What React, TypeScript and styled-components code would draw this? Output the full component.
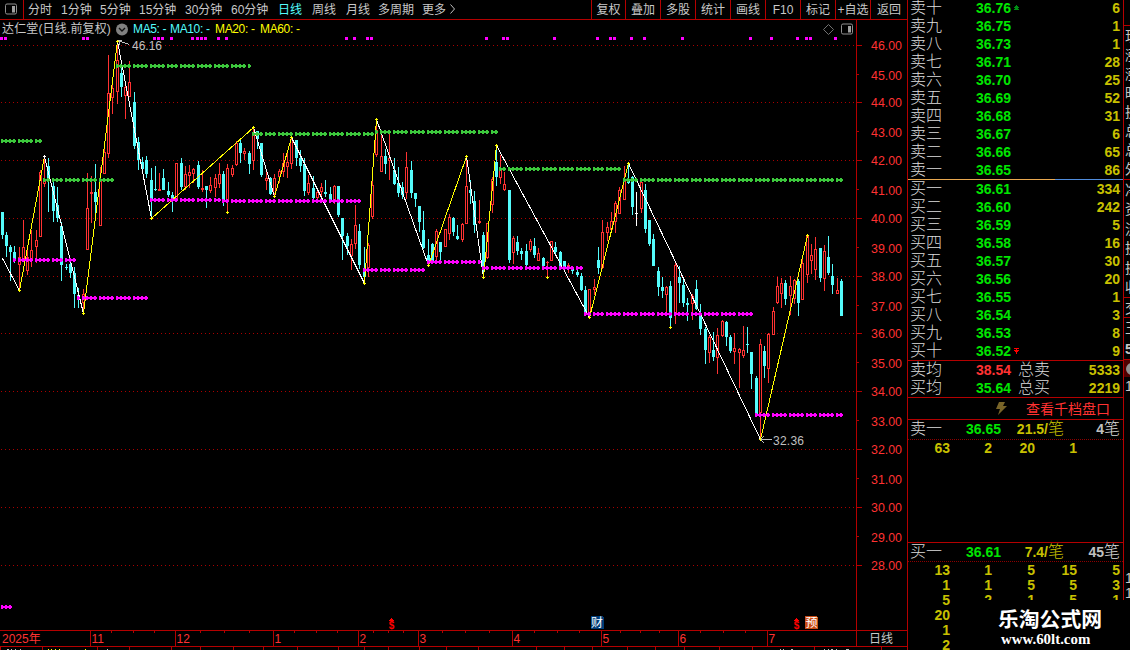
import React from "react";
import styled, { createGlobalStyle } from "styled-components";

const RED = "#b40000";
const SANS = `"Liberation Sans", "Noto Sans CJK SC", sans-serif`;

const Global = createGlobalStyle`
  html, body { margin: 0; background: #000; overflow: hidden; }
  body { font-family: ${SANS}; font-weight: 400; }
  * { box-sizing: border-box; }
`;

/* ---------- page frame ---------- */
const Page = styled.div`
  position: relative;
  display: flex;
  width: 1130px;
  height: 650px;
  overflow: hidden;
  background: #000;
  color: #c8c8c8;
`;
const ChartPane = styled.div`
  width: 908px;
  border-right: 1px solid ${RED};
  display: flex;
  flex-direction: column;
`;

/* ---------- toolbar ---------- */
const Toolbar = styled.div`
  display: flex;
  height: 20px;
  flex: none;
  border-bottom: 1px solid ${RED};
  font-size: 12px;
  line-height: 20px;
  white-space: nowrap;
`;
const IconCell = styled.div`
  width: 24px;
  border-right: 1px solid ${RED};
  padding: 3px 0 0 5px;
  margin-right: 4px;
  line-height: 0;
`;
const Period = styled.div<{ $w: number; $on?: boolean }>`
  width: ${(p) => p.$w}px;
  color: ${(p) => (p.$on ? "#54fcfc" : "#c8c8c8")};
`;
const Tools = styled.div`
  display: flex;
  margin-left: auto;
`;
const Tool = styled.div<{ $w: number }>`
  width: ${(p) => p.$w}px;
  border-left: 1px solid ${RED};
  text-align: center;
`;

/* ---------- title ---------- */
const Title = styled.div`
  display: flex;
  align-items: center;
  flex: none;
  width: 857px;
  height: 17px;
  border-right: 1px solid ${RED};
  padding: 1px 0 0 2px;
  font-size: 12px;
  line-height: 17px;
  white-space: nowrap;
`;
const StockName = styled.div`
  width: 114px;
  letter-spacing: 0.15px;
`;
const Average = styled.div<{ $c: string; $w: number }>`
  width: ${(p) => p.$w}px;
  color: ${(p) => p.$c};
  letter-spacing: -0.35px;
`;
const TitleIcons = styled.div`
  display: flex;
  gap: 7px;
  align-items: center;
  margin: 0 3px 0 auto;
`;
const Plot = styled.svg`
  display: block;
  flex: none;
`;

/* ---------- time axis ---------- */
const TimeAxis = styled.div`
  display: flex;
  flex: none;
  height: 17px;
  border-top: 1px solid ${RED};
  border-bottom: 1px solid ${RED};
  font-size: 12px;
  line-height: 16px;
  color: #ff3232;
`;
const Month = styled.div<{ $w: number; $first?: boolean }>`
  position: relative;
  width: ${(p) => p.$w}px;
  border-left: ${(p) => (p.$first ? "0" : `1px solid ${RED}`)};
  padding-left: ${(p) => (p.$first ? 2 : 0.5)}px;
`;
const WeekTicks = styled.div`
  position: absolute;
  inset: 0 0 auto 0;
  display: flex;
  justify-content: space-evenly;
  i { width: 1px; height: 2px; background: ${RED}; }
`;
const AxisMode = styled.div`
  flex: 1;
  border-left: 1px solid ${RED};
  padding-right: 2px;
  text-align: center;
  color: #c8c8c8;
`;

/* ---------- order book ---------- */
const Book = styled.div`
  width: 216px;
  border-right: 1px solid ${RED};
  font-size: 16px;
  font-weight: 300;
  color: #dcdcdc;
`;
const Asks = styled.div`
  margin-top: -1px;
`;
const Section = styled.div<{ $h: number }>`
  height: ${(p) => p.$h}px;
  border-bottom: 1px solid ${RED};
  overflow: hidden;
`;
const Spread = styled.div`
  display: flex;
  height: 1px;
  &::before { content: ""; width: 147px; background: #e8a850; }
  &::after { content: ""; flex: 1; background: #508cdc; }
`;
const Row = styled.div`
  display: grid;
  grid-template-columns: 66px 38px 1fr auto;
  align-items: center;
  height: 18px;
  padding: 0 3px 0 2px;
  line-height: 18px;
  white-space: nowrap;
`;
const TotalRow = styled(Row)`
  grid-template-columns: 66px 42px 1fr auto;
`;
const QuoteRow = styled(Row)<{ $h: number }>`
  grid-template-columns: 56px 41px 57px 1fr;
  height: ${(p) => p.$h}px;
  padding-bottom: 1px;
  border-bottom: 1px dotted #8c0000;
`;
const Num = styled.span<{ $c: string; $right?: boolean }>`
  font-family: ${SANS};
  font-size: 14px;
  font-weight: 700;
  color: ${(p) => p.$c};
  text-align: ${(p) => (p.$right ? "right" : "left")};
`;
const Unit = styled.span<{ $c: string }>`
  color: ${(p) => p.$c};
  text-align: right;
`;
const DepthLink = styled.div`
  display: flex;
  align-items: center;
  height: 21px;
  padding-left: 87px;
  gap: 19px;
  font-size: 14px;
  font-weight: 400;
  line-height: 20px;
  color: #ff3232;
`;
const Lots = styled.div`
  display: grid;
  grid-template-columns: 42px 42px 43px 42px 43px;
  height: 15px;
  line-height: 16px;
`;

/* ---------- side strip ---------- */
const Strip = styled.div`
  width: 6px;
  overflow: hidden;
  font-size: 14px;
  white-space: nowrap;
`;
const StripBlock = styled.div<{ $h: number; $bg?: string; $line?: boolean }>`
  display: flex;
  flex-direction: column;
  justify-content: space-around;
  height: ${(p) => p.$h}px;
  background: ${(p) => p.$bg || "none"};
  border-bottom: ${(p) => (p.$line ? `1px solid ${RED}` : "0")};
  line-height: 14px;
  padding-left: 1px;
`;

/* ---------- site mark ---------- */
const Mark = styled.div`
  position: absolute;
  left: 953px;
  top: 600px;
  width: 177px;
  height: 50px;
  padding: 5px 0 0 45px;
  background: #000;
  color: #fff;
  white-space: nowrap;
`;
const MarkName = styled.div`
  font: bold 20.8px/26px "Noto Sans CJK SC", sans-serif;
`;
const MarkSite = styled.div`
  font: bold 14.9px/16px "Liberation Serif", serif;
  padding-left: 3px;
`;

/* ---------- data ---------- */
const periods: [string, number][] = [
  ["分时", 33], ["1分钟", 39], ["5分钟", 39], ["15分钟", 46], ["30分钟", 46], ["60分钟", 47],
  ["日线", 34], ["周线", 34], ["月线", 32], ["多周期", 44], ["更多", 27],
];
const tools: [string, number][] = [
  ["复权", 34], ["叠加", 35], ["多股", 35], ["统计", 35], ["画线", 35], ["F10", 35], ["标记", 35], ["+自选", 35], ["返回", 37],
];
const months: [string, number, boolean][] = [
  ["2025年", 90, false], ["11", 85, true], ["12", 98, true], ["1", 85, true], ["2", 60, true], ["3", 94, true],
  ["4", 89, true], ["5", 77, true], ["6", 89, true], ["7", 89, false],
];
const asks: [string, string, string][] = [
  ["卖十", "36.76", "6"], ["卖九", "36.75", "1"], ["卖八", "36.73", "1"], ["卖七", "36.71", "28"], ["卖六", "36.70", "25"],
  ["卖五", "36.69", "52"], ["卖四", "36.68", "31"], ["卖三", "36.67", "6"], ["卖二", "36.66", "65"], ["卖一", "36.65", "86"],
];
const bids: [string, string, string][] = [
  ["买一", "36.61", "334"], ["买二", "36.60", "242"], ["买三", "36.59", "5"], ["买四", "36.58", "16"], ["买五", "36.57", "30"],
  ["买六", "36.56", "20"], ["买七", "36.55", "1"], ["买八", "36.54", "3"], ["买九", "36.53", "8"], ["买十", "36.52", "9"],
];
const bidLots = [
  ["13", "1", "5", "15", "5"], ["1", "1", "5", "5", "3"], ["5", "2", "1", "5", "1"], ["20"], ["1"], ["2"],
];

/* high, low, body top, body bottom; c = falling, r = rising, w = flat */
const candleText = `
212 239 212 235 c|232 257 235 246 c|245 281 247 252 c|246 263 252 260 c|247 291 257 265 r|220 262 247 259 r|248 275 257 271 r|230 267 250 259 r|230 263 240 247 r|170 237 172 237 r|
158 187 180 184 r|158 212 166 180 c|180 222 186 211 c|187 222 205 218 c|222 281 226 265 c|264 270 267 268 c|262 278 264 273 c|267 308 273 294 c|288 308 295 300 c|289 314 294 303 r|
173 250 208 250 r|176 223 192 194 r|164 220 192 202 c|167 226 180 226 r|149 174 152 174 r|55 158 93 154 r|78 114 88 98 r|42 104 60 92 r|63 97 73 87 c|84 119 87 96 r|
61 97 82 97 r|92 149 102 146 c|137 170 142 160 c|157 170 162 169 c|156 178 160 174 c|168 218 180 200 c|166 191 189 190 c|173 191 189 191 r|169 190 178 190 c|182 197 191 195 c|
192 212 195 200 c|163 200 163 200 r|158 190 163 187 c|166 190 174 187 r|165 188 172 176 r|168 183 169 174 r|161 189 165 187 c|170 192 188 190 r|186 208 186 190 c|177 193 185 191 r|
174 197 178 188 r|163 188 174 184 r|171 206 174 200 c|164 213 168 201 r|165 177 168 175 r|141 166 143 165 r|140 163 143 153 c|148 160 151 154 r|151 174 153 164 c|127 170 134 161 r|
131 149 131 139 c|143 177 143 175 c|171 190 178 181 r|177 195 178 194 c|174 195 178 194 r|169 183 171 177 r|153 177 163 172 r|152 178 162 167 r|137 169 139 164 r|140 166 140 158 c|
150 172 158 166 c|158 196 164 191 c|175 195 183 193 r|176 199 188 198 c|188 200 192 198 r|183 197 187 192 r|180 197 192 194 c|187 201 194 200 c|185 204 186 202 r|186 217 186 215 c|
218 260 218 236 c|233 255 236 246 c|239 270 244 256 r|205 249 225 244 r|224 269 231 265 c|247 283 268 277 c|243 277 245 268 r|181 219 185 217 r|120 157 130 155 r|134 172 156 172 r|
149 174 156 164 c|133 180 158 161 r|158 185 170 184 c|167 197 183 193 c|182 199 187 195 c|152 199 167 193 r|161 198 170 193 c|193 207 193 199 c|206 232 206 222 c|211 249 230 248 c|
239 265 255 262 c|243 263 244 262 c|229 263 231 257 r|242 262 242 252 c|229 247 229 247 r|214 240 217 234 r|217 236 218 232 c|225 240 236 239 c|223 242 224 240 r|158 224 186 224 r|
180 204 190 193 c|191 233 201 225 c|200 224 221 223 r|232 277 235 267 c|223 259 223 258 r|177 213 179 205 r|147 186 162 177 c|155 184 170 178 r|172 191 184 190 r|190 263 190 260 c|
236 264 238 253 r|236 255 242 251 c|248 260 251 254 c|244 267 251 265 c|239 252 241 250 r|238 258 246 255 c|248 261 253 261 r|257 267 258 266 c|261 277 262 263 r|241 261 241 261 r|
242 254 247 252 c|251 266 252 266 c|261 269 261 269 c|263 273 265 268 r|266 274 268 271 c|269 277 272 275 c|273 291 276 290 c|286 314 290 313 c|289 316 289 313 r|279 295 287 290 r|
247 274 260 268 c|220 269 232 268 r|222 241 227 233 r|212 232 221 230 r|201 233 203 222 r|187 214 190 214 r|166 200 180 200 r|165 184 181 183 c|176 215 177 207 c|192 226 213 214 w|
181 213 182 209 r|184 233 190 229 c|220 246 220 244 c|234 266 239 266 c|267 296 271 287 c|277 298 287 291 c|286 314 287 295 r|281 326 286 318 c|262 324 265 314 r|266 303 277 283 c|
278 307 285 303 c|298 321 303 305 c|294 320 296 304 r|280 310 289 309 c|304 335 314 329 c|327 364 329 350 c|335 363 337 353 r|332 361 350 357 c|328 374 335 358 r|320 337 321 336 r|
321 346 322 337 c|335 353 337 351 c|333 364 348 352 r|348 388 349 353 r|326 358 350 356 r|327 353 344 345 c|352 389 352 374 c|376 414 378 414 c|339 439 344 413 r|346 378 351 366 c|
333 383 334 369 r|307 335 311 335 r|277 304 286 303 r|278 308 283 294 r|280 305 283 299 c|276 315 286 296 r|279 304 280 299 r|279 316 281 303 c|255 300 263 300 r|235 283 236 275 r|
244 274 255 261 r|237 280 249 270 r|248 282 248 278 c|245 291 251 279 r|236 275 257 273 c|264 294 276 285 c|278 294 290 294 r|279 316 281 316 c`;
const candles = candleText.trim().split("|").map((s) => s.trim().split(" "));
const xAt = (i: number) => Math.floor(2.1 + i * 4.26);

const swing: [number, number][] = [
  [2, 258], [19, 290], [44, 156], [83, 313], [117, 41], [151, 218], [253, 127], [274, 196], [291, 137], [364, 283],
  [376, 119], [428, 265], [466, 156], [483, 277], [496, 145], [589, 317], [628, 163], [760, 439], [807, 235],
];
const diamonds: [number, number][] = [[227, 212], [547, 277], [670, 327], [807, 235]];
/* y, first x, last x, colour */
const levels: [number, number, number, string][] = [
  [141, 1, 42, "g"], [180, 43, 114, "g"], [66, 116, 250, "g"], [134, 252, 374, "g"], [132, 375, 497, "g"], [169, 499, 622, "g"],
  [180, 622, 842, "g"], [260, 13, 76, "m"], [298, 77, 148, "m"], [200, 150, 221, "m"], [201, 222, 361, "m"], [270, 363, 426, "m"],
  [262, 427, 482, "m"], [268, 482, 583, "m"], [314, 584, 753, "m"], [415, 754, 842, "m"], [607, 1, 11, "m"],
];
const signals = [
  1, 5, 83, 87, 154, 158, 162, 171, 192, 197, 201, 205, 218, 226, 346, 354, 367, 371, 486, 503, 507, 554, 597, 610, 614, 631, 644,
  682, 750, 771, 797, 806, 810, 835,
];
const prices: [string, number][] = [
  ["46.00", 45], ["45.00", 74], ["44.00", 102], ["43.00", 131], ["42.00", 160], ["41.00", 189], ["40.00", 218], ["39.00", 247],
  ["38.00", 276], ["37.00", 305], ["36.00", 333], ["35.00", 362], ["34.00", 391], ["33.00", 420], ["32.00", 449], ["31.00", 478],
  ["30.00", 507], ["29.00", 536], ["28.00", 565],
];
const lowerTicks = [
  0, 42, 97, 129, 171, 200, 233, 263, 297, 338, 364, 388, 419, 446, 478, 536, 564, 592, 627, 655, 684, 719, 752, 814, 881,
];

const colors: Record<string, string> = { c: "#54fcfc", r: "#ff3232", w: "#ffffff", g: "#3cc83c", m: "#ff00ff" };

const PanelIcon = () => (
  <svg width="12" height="12" viewBox="0 0 12 12">
    <rect x=".5" y="1" width="11" height="10" rx="1.5" fill="none" stroke="#909090" />
    <rect x="7" y="3" width="3" height="6.5" fill="#a0a0a0" />
  </svg>
);

const Candle = ({ i, d }: { i: number; d: string[] }) => {
  const [h, l, t, b] = d.map(Number);
  const x = xAt(i);
  const c = colors[d[4]];
  return (
    <g fill={c}>
      <rect x={x} y={h} width="1" height={l - h} />
      <rect x={x - 1} y={t} width="3" height={b - t} />
      {d[4] === "r" && b - t > 2 && <rect x={x} y={t + 1} width="1" height={b - t - 2} fill="#000" />}
    </g>
  );
};

const Level = ({ d }: { d: [number, number, number, string] }) => {
  const [y, from, to, c] = d;
  const xs = candles.map((_, i) => xAt(i)).filter((x) => x >= from && x <= to);
  return (
    <g fill={colors[c]}>
      {xs.map((x, i) => (
        <React.Fragment key={x}>
          <rect x={x - 1} y={y - 1} width={xs[i + 1] - x === 4 ? 4 : 3} height="2" />
          <rect x={x - 1} y={y - 2} width="2" height="4" />
        </React.Fragment>
      ))}
    </g>
  );
};

const Dividend = ({ x }: { x: number }) => (
  <g>
    <path d={`M${x - 3} 621 L${x} 618 L${x + 3} 621z`} fill="#ff0000" />
    <text x={x} y="629" textAnchor="middle" fontSize="10" fontWeight="700" fill="#ff0000">$</text>
  </g>
);

const KLine = () => (
  <Plot width="907" height="593" viewBox="0 37 907 593" fontFamily={SANS} shapeRendering="crispEdges">
    {prices.map(([label, y], i) => (
      <g key={label}>
        {i % 2 === 0 && <path d={`M1 ${y + 0.5}H856`} stroke="#aa0000" strokeDasharray="1 3" />}
        <rect x="857" y={y} width={i % 2 ? 2 : 5} height="1" fill={RED} />
        <text x="871" y={y + 5 + (i % 2)} fontSize="12.4" textLength="31" fill="#ff3232">{label}</text>
      </g>
    ))}
    <rect x="856" y="37" width="1" height="593" fill={RED} />
    {signals.map((x) => <rect key={x} x={x - 1} y="37" width="3" height="3" fill="#ff00ff" />)}
    {candles.map((d, i) => <Candle key={i} i={i} d={d} />)}
    {swing.slice(1).map(([x, y], i) => (
      <line key={x} x1={swing[i][0] + 0.5} y1={swing[i][1] + 0.5} x2={x + 0.5} y2={y + 0.5} stroke={i % 2 ? "#ffff00" : "#ffffff"} />
    ))}
    {swing.slice(1, -1).map(([x, y], i) => (
      <path key={x} d={`M${x - 1} ${y + 0.5}h3M${x + 0.5} ${y - 1}v3`} stroke={i % 2 && x < 60 ? "#ffffff" : "#ffff00"} />
    ))}
    {levels.map((d, i) => <Level key={i} d={d} />)}
    {diamonds.map(([x, y]) => (
      <path key={x} d={`M${x} ${y - 1}h1v1h1v1h-1v1h-1v-1h-1v-1h1z`} fill="#ffff00" />
    ))}
    <path d="M118 40.5l11 4M118 40.5h4M119 41v4" stroke="#c0c0c0" fill="none" />
    <text x="132" y="50" fontSize="12" textLength="30" fill="#c0c0c0">46.16</text>
    <path d="M761 439.5h11M761 439l3-3M761 440l3 3" stroke="#c0c0c0" fill="none" />
    <text x="773" y="445" fontSize="12" textLength="31" fill="#c0c0c0">32.36</text>
    <Dividend x={391.5} />
    <Dividend x={796.5} />
    <path d="M591 616h11l2 2v11h-13z" fill="#003c78" />
    <text x="591" y="627" fontSize="12" fill="#fff">财</text>
    <path d="M805 616h11l2 2v11h-13z" fill="#c84b14" />
    <text x="805.5" y="627" fontSize="12" fill="#fff">预</text>
  </Plot>
);

const GREEN = "#00e600";
const GOLD = "#c8c000";

export default function App() {
  return (
    <>
      <Global />
      <Page>
        <ChartPane>
          <Toolbar>
            <IconCell><PanelIcon /></IconCell>
            {periods.map(([t, w]) => <Period key={t} $w={w} $on={t === "日线"}>{t}</Period>)}
            <svg width="8" height="18" viewBox="0 0 8 18"><path d="M1.5 4.5l4 4.5-4 4.5" fill="none" stroke="#c0c0c0" /></svg>
            <Tools>{tools.map(([t, w]) => <Tool key={t} $w={w}>{t}</Tool>)}</Tools>
          </Toolbar>
          <Title>
            <StockName>达仁堂(日线.前复权)</StockName>
            <svg width="17" height="13" viewBox="0 0 17 13">
              <circle cx="6" cy="6.5" r="6" fill="#808080" />
              <path d="M3 5l3 3 3-3" fill="none" stroke="#101010" strokeWidth="1.4" />
            </svg>
            <Average $c="#54fcfc" $w={37}>MA5: -</Average>
            <Average $c="#54fcfc" $w={45}>MA10: -</Average>
            <Average $c="#ffff00" $w={45}>MA20: -</Average>
            <Average $c="#ffff00" $w={45}>MA60: -</Average>
            <TitleIcons>
              <svg width="11" height="11" viewBox="0 0 11 11"><path d="M5.5 .5l5 5-5 5-5-5z" fill="none" stroke="#707070" /></svg>
              <PanelIcon />
            </TitleIcons>
          </Title>
          <KLine />
          <TimeAxis>
            {months.map(([m, w, ticks], i) => (
              <Month key={m} $w={w} $first={i === 0}>
                {m}
                {ticks && <WeekTicks><i /><i /><i /></WeekTicks>}
              </Month>
            ))}
            <AxisMode>日线</AxisMode>
          </TimeAxis>
          <Plot width="907" height="3" viewBox="0 647 907 3" shapeRendering="crispEdges">
            {lowerTicks.map((x) => <rect key={x} x={x} y="647" width="1" height="3" fill={RED} />)}
            <path d="M7 649.5h2m2 0h1m3 0h1m4 0h1m86 0h1M780 649.5h1m2 0h1m7 0h2M824 649.5h1m3 0h1m2 0h2m3 0h1m9 0h3" stroke="#c0c0c0" />
            <path d="M48 649.5h1m2 0h1m3 0h1m3 0h1m25 0h1" stroke="#ffff00" />
          </Plot>
        </ChartPane>

        <Book>
          <Asks>
            {asks.map(([n, p, q], i) => (
              <Row key={n}>
                <span>{n}</span>
                <Num $c={GREEN}>{p}</Num>
                <svg width="5" height="6" viewBox="0 0 5 6" shapeRendering="crispEdges">
                  {i === 0 && <path d="M2 0h1v1h1v1h1v1H4v1h1v1H0V4h1V3H0V2h1V1h1z" fill="#008c14" />}
                </svg>
                <Num $c={GOLD} $right>{q}</Num>
              </Row>
            ))}
          </Asks>
          <Spread />
          <Section $h={181}>
            {bids.map(([n, p, q], i) => (
              <Row key={n}>
                <span>{n}</span>
                <Num $c={GREEN}>{p}</Num>
                <svg width="5" height="6" viewBox="0 0 5 6" shapeRendering="crispEdges">
                  {i === 9 && <path d="M0 0h5v1H3v1h2v1H4v1H3v2H2V4H1V3H0V2h2V1H0z" fill="#ff0000" />}
                </svg>
                <Num $c={GOLD} $right>{q}</Num>
              </Row>
            ))}
          </Section>
          <Section $h={37}>
            <TotalRow><span>卖均</span><Num $c="#ff3232">38.54</Num><span>总卖</span><Num $c={GOLD} $right>5333</Num></TotalRow>
            <TotalRow><span>买均</span><Num $c={GREEN}>35.64</Num><span>总买</span><Num $c={GOLD} $right>2219</Num></TotalRow>
          </Section>
          <Section $h={22}>
            <DepthLink>
              <svg width="12" height="13" viewBox="0 0 12 13"><path d="M4 0h6L8 4h4L3 13l2-6H1z" fill="#786428" /></svg>
              查看千档盘口
            </DepthLink>
          </Section>
          <Section $h={123}>
            <QuoteRow $h={20}>
              <span>卖一</span><Num $c={GREEN}>36.65</Num>
              <Unit $c={GOLD}><Num $c={GOLD}>21.5/</Num>笔</Unit>
              <Unit $c="#dcdcdc"><Num $c="#c0c0c0">4</Num>笔</Unit>
            </QuoteRow>
            <Lots>{["63", "2", "20", "1"].map((v, i) => <Num key={i} $c={GOLD} $right>{v}</Num>)}</Lots>
          </Section>
          <QuoteRow $h={19}>
            <span>买一</span><Num $c={GREEN}>36.61</Num>
            <Unit $c={GOLD}><Num $c={GOLD}>7.4/</Num>笔</Unit>
            <Unit $c="#dcdcdc"><Num $c="#c0c0c0">45</Num>笔</Unit>
          </QuoteRow>
          {bidLots.map((r, k) => (
            <Lots key={k}>{r.map((v, i) => <Num key={i} $c={GOLD} $right>{v}</Num>)}</Lots>
          ))}
        </Book>

        <Strip>
          <StripBlock $h={26} $line />
          <StripBlock $h={154} $line>{["现", "涨", "涨", "昨", "换", "总", "总", "外"].map((t, i) => <span key={i}>{t}</span>)}</StripBlock>
          <StripBlock $h={118} $line>{["净", "资", "流", "换", "换", "收"].map((t, i) => <span key={i}>{t}</span>)}</StripBlock>
          <StripBlock $h={20} $line><span>交</span></StripBlock>
          <StripBlock $h={42} $line><span>王</span><b>5</b></StripBlock>
          <StripBlock $h={17} $bg="#500000">
            <svg width="12" height="14" viewBox="0 0 12 14"><circle cx="7" cy="7" r="6" fill="#909090" /></svg>
          </StripBlock>
          <StripBlock $h={18}><span>1</span></StripBlock>
          <StripBlock $h={175} />
          <StripBlock $h={16}><span>1</span></StripBlock>
          <StripBlock $h={14}><span>1</span></StripBlock>
        </Strip>

        <Mark>
          <MarkName>乐淘公式网</MarkName>
          <MarkSite>www.60lt.com</MarkSite>
        </Mark>
      </Page>
    </>
  );
}
